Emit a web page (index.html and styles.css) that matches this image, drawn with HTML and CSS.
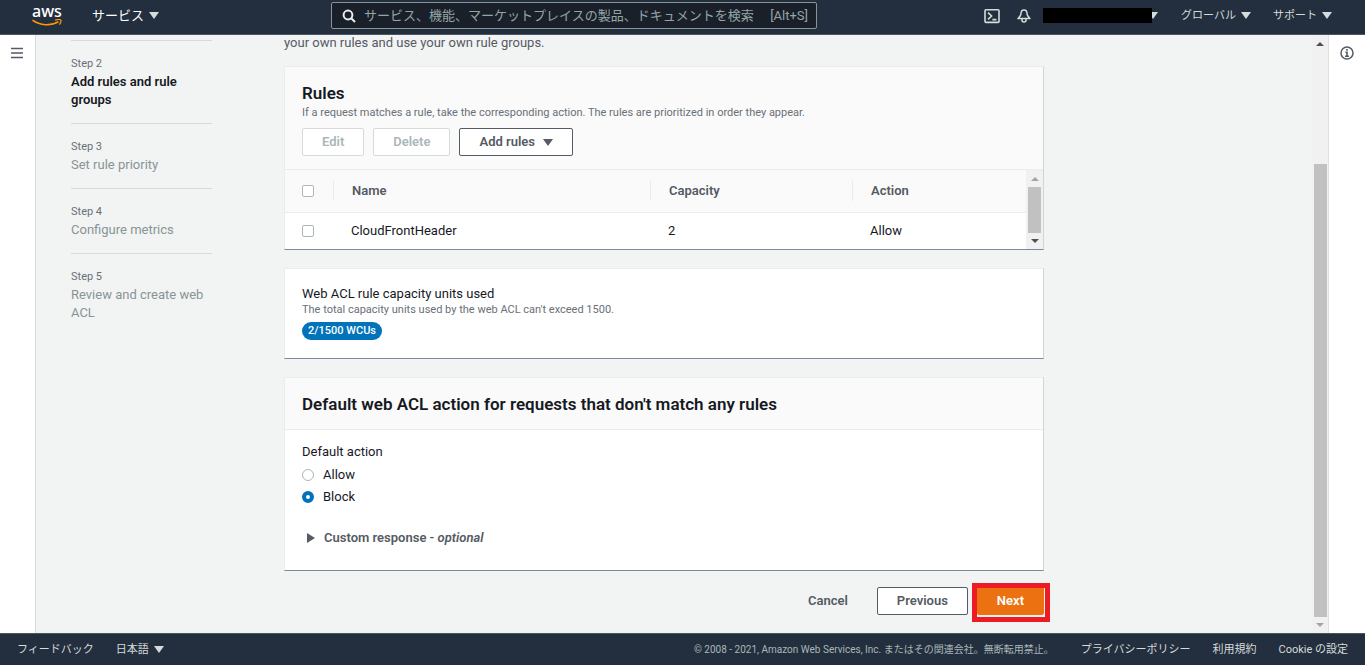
FILE: index.html
```html
<!DOCTYPE html>
<html lang="ja">
<head>
    <meta charset="UTF-8">
    <meta name="viewport" content="width=device-width, initial-scale=1.0">
    <title>AWS WAF - Create web ACL</title>
    <link rel="stylesheet" href="styles.css">
</head>
<body>
    <header class="topbar">
        <a class="logo" href="#" aria-label="aws">
            <span>aws</span>
            <svg width="30" height="8" viewBox="0 0 30 8" fill="none" stroke="#f90" stroke-width="1.6">
                <path d="M0.5 1.2C8 6.8 19 7.2 26.5 2.6"/>
                <path d="M23 1.2C25 0.6 28 0.4 28.8 1C29.4 1.8 28.6 4 27.4 5.6" stroke-width="1.2"/>
            </svg>
        </a>
        <button class="nav-btn services">サービス <span class="caret"></span></button>
        <label class="search">
            <svg width="14" height="14" viewBox="0 0 14 14" fill="none" stroke="#eaeded" stroke-width="2">
                <circle cx="6" cy="6" r="4.4"/>
                <path d="M9.2 9.2L13 13"/>
            </svg>
            <input type="text" aria-label="検索" placeholder="サービス、機能、マーケットプレイスの製品、ドキュメントを検索します">
            <span class="shortcut">[Alt+S]</span>
        </label>
        <nav class="top-right">
            <button class="icon-btn" aria-label="CloudShell">
                <svg width="16" height="16" viewBox="0 0 16 16" fill="none" stroke="#d5dbdb" stroke-width="1.6">
                    <rect x="1" y="1.8" width="14" height="12.6" rx="1"/>
                    <path d="M4 4.6L7.6 8L4 11.4M8.4 11.6H12.4"/>
                </svg>
            </button>
            <button class="icon-btn bell" aria-label="通知">
                <svg width="14" height="14" viewBox="0 0 14 14" fill="none" stroke="#d5dbdb" stroke-width="1.5" stroke-linejoin="round">
                    <path d="M7 1C4.8 1 4 2.6 4 4.6C4 6.8 2.6 7.6 1 9.6H13C11.4 7.6 10 6.8 10 4.6C10 2.6 9.2 1 7 1Z"/>
                    <path d="M5 10V11.6C5 13.4 9 13.4 9 11.6V10"/>
                </svg>
            </button>
            <button class="nav-btn account" aria-label="アカウント"><span class="mask"></span><span class="caret"></span></button>
            <button class="nav-btn small">グローバル <span class="caret"></span></button>
            <button class="nav-btn small">サポート <span class="caret"></span></button>
        </nav>
    </header>

    <div class="layout">
        <aside class="rail">
            <button class="icon-btn" aria-label="Open navigation">
                <svg width="12" height="12" viewBox="0 0 12 12" stroke="#545b64" stroke-width="1.5">
                    <path d="M0 1.5H12M0 6H12M0 10.5H12"/>
                </svg>
            </button>
        </aside>

        <main class="main">
            <ol class="steps">
                <li><small>Step 2</small><strong>Add rules and rule groups</strong></li>
                <li><small>Step 3</small><span>Set rule priority</span></li>
                <li><small>Step 4</small><span>Configure metrics</span></li>
                <li><small>Step 5</small><span>Review and create web ACL</span></li>
            </ol>

            <form class="content">
                <p class="intro">your own rules and use your own rule groups.</p>

                <section class="card">
                    <div class="card-header">
                        <h2>Rules</h2>
                        <p class="hint">If a request matches a rule, take the corresponding action. The rules are prioritized in order they appear.</p>
                        <div class="actions">
                            <button type="button" class="btn" disabled>Edit</button>
                            <button type="button" class="btn" disabled>Delete</button>
                            <button type="button" class="btn">Add rules <span class="caret"></span></button>
                        </div>
                    </div>
                    <div class="table-wrap">
                        <table class="rules">
                            <thead>
                                <tr>
                                    <th class="col-check"><input type="checkbox" aria-label="Select all rules"></th>
                                    <th class="col-name"><div>Name</div></th>
                                    <th class="col-capacity"><div>Capacity</div></th>
                                    <th><div>Action</div></th>
                                </tr>
                            </thead>
                            <tbody>
                                <tr>
                                    <td><input type="checkbox" aria-label="Select CloudFrontHeader"></td>
                                    <td>CloudFrontHeader</td>
                                    <td>2</td>
                                    <td>Allow</td>
                                </tr>
                            </tbody>
                        </table>
                        <div class="scrollbar" aria-hidden="true">
                            <i class="up dim"></i>
                            <i class="thumb"></i>
                            <i class="down"></i>
                        </div>
                    </div>
                </section>

                <section class="card capacity">
                    <p class="label">Web ACL rule capacity units used</p>
                    <p class="hint">The total capacity units used by the web ACL can't exceed 1500.</p>
                    <span class="badge">2/1500 WCUs</span>
                </section>

                <section class="card">
                    <div class="card-header">
                        <h2>Default web ACL action for requests that don't match any rules</h2>
                    </div>
                    <fieldset class="default-action">
                        <legend>Default action</legend>
                        <label><input type="radio" name="action"> Allow</label>
                        <label><input type="radio" name="action" checked> Block</label>
                        <button type="button" class="expander"><span class="arrow"></span>Custom response - <em>optional</em></button>
                    </fieldset>
                </section>

                <div class="form-actions">
                    <button type="button" class="btn link">Cancel</button>
                    <button type="button" class="btn">Previous</button>
                    <div class="marked">
                        <button type="button" class="btn primary">Next</button>
                    </div>
                </div>
            </form>

        </main>

        <div class="scrollbar page-scroll" aria-hidden="true">
            <i class="up"></i>
            <i class="thumb"></i>
            <i class="down dim"></i>
        </div>

        <aside class="rail right">
            <button class="icon-btn" aria-label="Help">
                <svg width="14" height="14" viewBox="0 0 14 14" fill="none" stroke="#545b64">
                    <circle cx="7" cy="7" r="6" stroke-width="1.5"/>
                    <path d="M7 3V4.8M5.4 6.3H7V10M5 10.2H9" stroke-width="1.6"/>
                </svg>
            </button>
        </aside>
    </div>

    <footer class="footer">
        <a href="#">フィードバック</a>
        <button class="nav-btn small">日本語 <span class="caret"></span></button>
        <span class="copyright">© 2008 - 2021, Amazon Web Services, Inc. またはその関連会社。無断転用禁止。</span>
        <a href="#">プライバシーポリシー</a>
        <a href="#">利用規約</a>
        <a href="#">Cookie の設定</a>
    </footer>
</body>
</html>
```
FILE: styles.css
```css
* { margin: 0; padding: 0; box-sizing: border-box; }
body {
    display: flex;
    flex-direction: column;
    height: 100vh;
    overflow: hidden;
    font: 13px/18px Roboto, "Noto Sans CJK JP", sans-serif;
    color: #16191f;
    background: #f2f3f3;
}
button, input {
    font: inherit;
    color: inherit;
}
button {
    background: none;
    border: none;
    cursor: pointer;
    white-space: nowrap;
}
a {
    color: inherit;
    text-decoration: none;
}
svg { display: block; }
.caret {
    display: inline-block;
    border: 5px solid transparent;
    border-top: 7px solid currentColor;
    border-bottom: none;
}

/* top bar */
.topbar {
    display: flex;
    align-items: center;
    flex: none;
    height: 35px;
    padding: 0 33px 3px 32px;
    background: #232f3e;
    border-bottom: 1px solid #4b5563;
    color: #d5dbdb;
}
.logo {
    width: 30px;
    color: #fff;
    font-family: "Noto Sans", sans-serif;
    font-size: 16px;
    font-weight: 500;
    line-height: 14px;
}
.logo span {
    display: block;
    height: 15px;
}
.nav-btn {
    display: flex;
    align-items: center;
    gap: 5px;
}
.services { margin-left: 30px; color: #fff; }
.services .caret { color: #d5dbdb; }
.small { font-size: 11px; }
.search {
    display: flex;
    align-items: center;
    width: 486px;
    height: 27px;
    margin-left: 172px;
    padding: 0 8px 0 10px;
    background: #1a2029;
    border: 1px solid #879596;
    border-radius: 2px;
}
.search input {
    flex: 1;
    min-width: 0;
    margin: 0 14px 0 8px;
    background: none;
    border: none;
    outline: none;
}
.search input::placeholder { color: #95a5a6; opacity: 1; }
.shortcut { color: #95a5a6; }
.top-right {
    display: flex;
    align-items: center;
    margin-left: auto;
}
.bell { margin: 0 12px 0 17px; }
.account { gap: 0; margin-right: 23px; }
.mask {
    position: relative;
    z-index: 1;
    width: 109px;
    height: 15px;
    background: #000;
}
.account .caret { margin-left: -4px; }
.top-right .small + .small { margin-left: 22px; }

/* page layout */
.layout {
    display: flex;
    flex: 1;
    min-height: 0;
}
.rail {
    flex: none;
    width: 36px;
    padding: 11px;
    background: #fff;
    border-right: 1px solid #d5dbdb;
}
.rail.right {
    width: 37px;
    border-right: none;
    border-left: 1px solid #e0e0e0;
}
.main {
    display: flex;
    flex: 1;
    gap: 72px;
    padding: 0 35px;
    overflow: hidden;
}

/* wizard steps */
.steps {
    flex: none;
    width: 141px;
    padding-top: 5px;
    list-style: none;
    color: #879596;
}
.steps li {
    padding: 14px 0;
    border-top: 1px solid #d5dbdb;
}
.steps small {
    display: block;
    margin-bottom: 1px;
    font-size: 11px;
    line-height: 17px;
    color: #687078;
}
.steps strong { font-weight: 600; color: #16191f; }
.steps span { display: block; }

.content {
    flex: 1;
    max-width: 760px;
}
.intro {
    margin: -1px 0 14px;
    color: #545b64;
}

/* cards */
.card {
    margin-bottom: 18px;
    background: #fff;
    border: 1px solid #eaeded;
    border-right-color: #d0d5d5;
    border-bottom-color: #7d8998;
}
.card-header {
    padding: 15px 17px 13px;
    background: #fafafa;
    border-bottom: 1px solid #eaeded;
}
h2 {
    margin-bottom: 1px;
    font-size: 17px;
    font-weight: 600;
    line-height: 22px;
}
.hint {
    font-size: 11px;
    line-height: 16px;
    color: #687078;
}
.actions {
    display: flex;
    gap: 9px;
    margin-top: 7px;
}
.btn {
    display: flex;
    align-items: center;
    gap: 8px;
    height: 28px;
    padding: 0 19px;
    background: #fff;
    border: 1px solid #545b64;
    border-radius: 2px;
    color: #545b64;
    font-weight: 600;
}
.btn:disabled {
    border-color: #d5dbdb;
    color: #aab7b8;
    cursor: default;
}

/* rules table */
.table-wrap {
    display: flex;
}
.rules {
    flex: 1;
    table-layout: fixed;
    border-collapse: collapse;
    text-align: left;
}
.rules th {
    padding: 10px 0 11px;
    background: #fafafa;
    border-bottom: 1px solid #eaeded;
    color: #545b64;
    font-weight: 600;
}
.rules th div {
    padding-left: 18px;
    border-left: 1px solid #eaeded;
    line-height: 21px;
}
.rules td { padding: 9px 0 9px 18px; }
.rules th.col-check, .rules td:first-child { padding-left: 17px; }
.col-check { width: 48px; }
.col-name { width: 317px; }
.col-capacity { width: 202px; }
input[type="checkbox"], input[type="radio"] {
    display: block;
    flex: none;
    appearance: none;
    width: 12px;
    height: 12px;
    background: #fff;
    border: 1px solid #aab7b8;
    border-radius: 2px;
}
input[type="radio"] { border-radius: 50%; }
input[type="radio"]:checked { border: 4px solid #0073bb; }

/* scrollbars */
.scrollbar {
    display: flex;
    flex-direction: column;
    align-items: center;
    flex: none;
    width: 17px;
    padding: 7px 0 6px;
    background: #f1f1f1;
}
.scrollbar .up, .scrollbar .down {
    border: 4px solid transparent;
    border-top: none;
    border-bottom: 4px solid #505050;
}
.scrollbar .down {
    border-top: 4px solid #505050;
    border-bottom: none;
}
.scrollbar .up.dim { border-bottom-color: #a3a3a3; }
.scrollbar .down.dim { border-top-color: #a3a3a3; }
.thumb {
    flex: 1;
    width: 13px;
    margin: 6px 0;
    background: #c1c1c1;
}
.page-scroll { width: 16px; }
.page-scroll .thumb { margin-top: 118px; }

.capacity { padding: 16px 17px 18px; }
.capacity .label { line-height: 17px; }
.badge {
    display: inline-block;
    margin-top: 4px;
    padding: 0 6px;
    border-radius: 9px;
    background: #0073bb;
    color: #fff;
    font-size: 11px;
    font-weight: 500;
}

.default-action {
    padding: 13px 17px 23px;
    border: none;
}
.default-action legend {
    float: left;
    width: 100%;
    margin-bottom: 5px;
}
.default-action label {
    display: flex;
    align-items: center;
    clear: both;
    gap: 9px;
    margin-bottom: 4px;
}
.expander {
    display: flex;
    align-items: center;
    margin-top: 23px;
    padding-left: 5px;
    color: #545b64;
    font-weight: 600;
    white-space: pre;
}
.arrow {
    margin-right: 9px;
    border: 5px solid transparent;
    border-left: 8px solid #545b64;
    border-right: none;
}

.form-actions {
    display: flex;
    justify-content: flex-end;
    gap: 9px;
    margin-top: -2px;
}
.btn.link {
    background: none;
    border-color: transparent;
}
.btn.primary {
    background: #ec7211;
    border-color: #ec7211;
    color: #fff;
}
.marked { position: relative; }
.marked::after {
    content: "";
    position: absolute;
    inset: -4px -6px -7px -5px;
    border: 5px solid #ed1c24;
    pointer-events: none;
}

/* footer */
.footer {
    display: flex;
    align-items: center;
    flex: none;
    gap: 22px;
    height: 32px;
    padding: 0 17px;
    background: #232f3e;
    border-top: 1px solid #4b5563;
    color: #d5dbdb;
    font-size: 11px;
}
.copyright {
    margin: 0 5px 0 auto;
    font-size: 10px;
    color: #aab7b8;
}
```
